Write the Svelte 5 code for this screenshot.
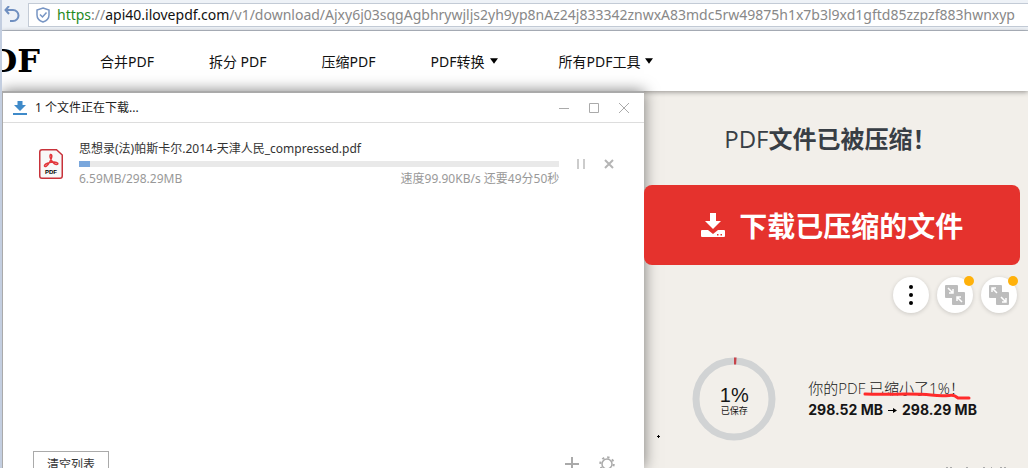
<script>
    const links = [
        { label: '合并PDF', menu: false },
        { label: '拆分 PDF', menu: false },
        { label: '压缩PDF', menu: false },
        { label: 'PDF转换', menu: true },
        { label: '所有PDF工具', menu: true }
    ];

    const download = {
        name: '思想录(法)帕斯卡尔.2014-天津人民_compressed.pdf',
        done: 6.59,
        total: 298.29,
        status: '速度99.90KB/s 还要49分50秒'
    };

    const saved = 1;
</script>

<div class="screen">
    <header class="toolbar">
        <button class="plain" aria-label="刷新">
            <svg width="16" height="18" viewBox="0 0 16 18" fill="none" stroke="#6f8fc0" stroke-width="2">
                <path d="M2 4h7a5.500 5.500 0 0 1 0 11H6" />
                <path d="M5 0L1.500 4L5 8" />
            </svg>
        </button>
        <div class="address">
            <svg width="16" height="16" viewBox="0 0 16 16" fill="none" stroke="#7795c4" stroke-width="1.500">
                <path d="M8 1L14 3V8C14 11.500 11 14 8 15C5 14 2 11.500 2 8V3Z" />
                <path d="M5 7.500L7.500 10L11.500 5.500" />
            </svg>
            <div class="url" role="textbox" tabindex="0" aria-label="地址"><span class="secure">https</span>://<span class="host">api40.ilovepdf.com</span>/v1/download/Ajxy6j03sqgAgbhrywjljs2yh9yp8nAz24j833342znwxA83mdc5rw49875h1x7b3l9xd1gftd85zzpzf883hwnxyp</div>
        </div>
    </header>

    <nav class="nav">
        <a class="logo" href="/" aria-label="PDF"><span>PDF</span></a>
        {#each links as link}
            <a class="link" class:menu={link.menu} href="/">
                {link.label}
                {#if link.menu}
                    <svg width="8" height="6" viewBox="0 0 9 6"><path d="M0 0H9L4.500 6Z" /></svg>
                {/if}
            </a>
        {/each}
    </nav>

    <div class="content">
        <section class="dialog">
            <div class="titlebar">
                <svg width="14" height="14" viewBox="0 0 14 14" fill="#3f8ac9">
                    <path d="M4.500 0h5v4H13L7 10L1 4h3.500zM0 12h14v2H0z" />
                </svg>
                <h2>1 个文件正在下载...</h2>
                <div class="controls">
                    <button class="plain" aria-label="最小化">
                        <svg width="12" height="12" viewBox="0 0 12 12" stroke="#aaa"><path d="M1 6.500h10" /></svg>
                    </button>
                    <button class="plain" aria-label="最大化">
                        <svg width="12" height="12" viewBox="0 0 12 12" fill="none" stroke="#aaa"><path d="M1.500 1.500h9v9h-9z" /></svg>
                    </button>
                    <button class="plain" aria-label="关闭">
                        <svg width="12" height="12" viewBox="0 0 12 12" stroke="#aaa"><path d="M1 1L11 11M11 1L1 11" /></svg>
                    </button>
                </div>
            </div>

            <div class="item">
                <svg class="file" width="24" height="30" viewBox="0 0 24 30">
                    <path d="M3 .75H17.500L23.250 6V27Q23.250 29.250 21 29.250H3Q.75 29.250 .75 27V3Q.75 .75 3 .75Z" fill="#f8f8f8" stroke="#c8323a" stroke-width="1.500" />
                    <path d="M11.500 5.500C14 5.500 12.500 10 10.500 13.500C8.500 17 6 18.500 5.500 17C5 15 11 13 15 13C19 13 20 15.500 17.500 15.500C14.500 15.500 9.500 8.500 11.500 5.500Z" fill="none" stroke="#e2353a" stroke-width="1.500" />
                    <text x="12" y="25" text-anchor="middle" class="tag">PDF</text>
                </svg>
                <div class="info">
                    <div class="name">{download.name}</div>
                    <div class="track">
                        <div class="bar" style="width: {(download.done / download.total) * 100}%;"></div>
                    </div>
                    <div class="stats">
                        <span>{download.done}MB/{download.total}MB</span>
                        <span>{download.status}</span>
                    </div>
                </div>
                <button class="plain" aria-label="暂停">
                    <svg width="12" height="12" viewBox="0 0 12 12" stroke="#ccc" stroke-width="2"><path d="M3 1v10M9 1v10" /></svg>
                </button>
                <button class="plain" aria-label="取消">
                    <svg width="12" height="12" viewBox="0 0 12 12" stroke="#b5b5b5" stroke-width="2"><path d="M2 2L10 10M10 2L2 10" /></svg>
                </button>
            </div>

            <div class="footer">
                <button class="clear">清空列表</button>
                <button class="plain" aria-label="新建">
                    <svg width="14" height="14" viewBox="0 0 14 14" stroke="#aaa" stroke-width="2"><path d="M7 0v14M0 7h14" /></svg>
                </button>
                <button class="plain" aria-label="设置">
                    <svg width="16" height="16" viewBox="0 0 16 16" fill="none" stroke="#aaa">
                        <circle cx="8" cy="8" r="5" stroke-width="1.500" />
                        <circle cx="8" cy="8" r="6.750" stroke-width="2" stroke-dasharray="2.300 3" />
                    </svg>
                </button>
            </div>
        </section>

        <main class="result">
            <h1>PDF<b>文件已被压缩！</b></h1>
            <button class="download">
                <svg width="24" height="24" viewBox="0 0 24 24" fill="#fff">
                    <path d="M9 0h6v8h5L12 16L4 8h5z" />
                    <path fill-rule="evenodd" d="M1 17h6l5 4l5-4h6q1 0 1 1v5q0 1-1 1H1q-1 0-1-1v-5q0-1 1-1zM16 21v1.500h1.500V21zM19.500 21v1.500H21V21z" />
                </svg>
                下载已压缩的文件
            </button>
            <div class="actions">
                <button class="round" aria-label="更多">
                    <svg width="20" height="20" viewBox="0 0 20 20">
                        <circle cx="10" cy="2" r="2" /><circle cx="10" cy="10" r="2" /><circle cx="10" cy="18" r="2" />
                    </svg>
                </button>
                <button class="round" aria-label="合并">
                    <svg width="20" height="20" viewBox="0 0 20 20">
                        <path d="M1 0h11q1 0 1 1v6h6q1 0 1 1v11q0 1-1 1H8q-1 0-1-1v-6H1q-1 0-1-1V1q0-1 1-1z" fill="#bdbdbd" />
                        <path d="M3 3L8 8M8 4V8H4M17 17L12 12M12 16V12H16" fill="none" stroke="#fff" stroke-width="1.500" />
                    </svg>
                    <i class="dot"></i>
                </button>
                <button class="round" aria-label="拆分">
                    <svg width="20" height="20" viewBox="0 0 20 20">
                        <path d="M1 0h11q1 0 1 1v6h6q1 0 1 1v11q0 1-1 1H8q-1 0-1-1v-6H1q-1 0-1-1V1q0-1 1-1z" fill="#bdbdbd" />
                        <path d="M8 8L3 3M3 7V3H7M12 12L17 17M17 13V17H13" fill="none" stroke="#fff" stroke-width="1.500" />
                    </svg>
                    <i class="dot"></i>
                </button>
            </div>
            <div class="summary">
                <div class="ring">
                    <svg width="84" height="84" viewBox="0 0 84 84" fill="none" stroke-width="7">
                        <circle cx="42" cy="42" r="38" stroke="#d1d3d4" />
                        <circle cx="42" cy="42" r="38" stroke="#c7434a" pathLength="100" stroke-dasharray="{saved} 100" transform="rotate(-90 42 42)" />
                    </svg>
                    <div class="percent">
                        <strong>{saved}%</strong>
                        <small>已保存</small>
                    </div>
                </div>
                <div class="sizes">
                    <p>你的PDF <span class="marked">已缩小了{saved}%！<svg width="108" height="8" viewBox="0 0 108 8" fill="none" stroke="#ff2b2b" stroke-width="3" stroke-linecap="round"><path d="M2 2C25 3 50 1 68 3S88 2 92 4L95 6L106 6" /></svg></span></p>
                    <p class="change">
                        <span>298.52 MB</span>
                        <svg width="9" height="7" viewBox="0 0 9 7"><path d="M0 3h5V1l4 2.500L5 6V4H0z" /></svg>
                        <span>298.29 MB</span>
                    </p>
                </div>
            </div>
            <svg class="cursor" width="3" height="3" viewBox="0 0 3 3"><path d="M1 0h1v1h1v1H2v1H1V2H0V1h1z" /></svg>
            <svg class="watermark" width="62" height="1" viewBox="0 0 62 1" fill="#aaa"><path d="M0 0h2v1H0zM4 0h2v1H4zM20 0h2v1h-2zM37 0h2v1h-2zM45 0h1v1h-1zM54 0h2v1h-2zM58 0h2v1h-2z" /></svg>
        </main>
    </div>
</div>

<style>
    :global(body) {
        margin: 0;
        overflow: hidden;
        font-family: "Noto Sans", "Noto Sans CJK SC", sans-serif;
        background: #f2efea;
    }
    .screen {
        height: 100vh;
        display: flex;
        flex-direction: column;
        overflow: hidden;
        box-sizing: border-box;
        border-left: 2px solid #c3cee0;
    }
    button {
        font-family: inherit;
        cursor: pointer;
    }
    .plain {
        display: flex;
        padding: 0;
        border: 0;
        background: none;
    }
    svg {
        flex: none;
    }
    h1, h2, p {
        margin: 0;
        font-weight: 400;
    }

    /* Browser toolbar */
    .toolbar {
        flex: none;
        display: flex;
        align-items: center;
        gap: 8px;
        height: 30px;
        padding-left: 2px;
        background: #eef2f7;
        border-bottom: 1px solid #b9c0ca;
    }
    .address {
        flex: 1;
        min-width: 0;
        display: flex;
        align-items: center;
        gap: 6px;
        height: 22px;
        padding-left: 6px;
        background: #fff;
        border: 1px solid #c3cbd6;
        border-right: 0;
        overflow: hidden;
    }
    .url {
        font-size: 14px;
        line-height: 22px;
        white-space: nowrap;
        color: #888;
    }
    .secure {
        color: #1f8a1f;
    }
    .host {
        color: #111;
    }

    /* Site navigation */
    .nav {
        flex: none;
        position: relative;
        display: flex;
        align-items: center;
        gap: 55px;
        height: 60px;
        background: #fff;
        box-shadow: 0 1px 5px rgba(0, 0, 0, 0.4);
    }
    .logo {
        display: flex;
        justify-content: flex-end;
        width: 38px;
        margin-right: 5px;
        overflow: hidden;
        font: bold 32px/40px "DejaVu Serif", serif;
        color: #000;
        text-decoration: none;
    }
    .link {
        display: flex;
        align-items: center;
        gap: 5px;
        font-size: 14px;
        font-weight: 400;
        color: #111;
        text-decoration: none;
        white-space: nowrap;
    }
    .menu {
        margin-right: 6px;
    }

    .content {
        flex: 1;
        min-height: 0;
        display: flex;
        align-items: stretch;
    }

    /* Download window */
    .dialog {
        position: relative;
        flex: none;
        width: 62.6%;
        display: flex;
        flex-direction: column;
        background: #fff;
        box-sizing: border-box;
        border-left: 1px solid #aaa;
        border-top: 2px solid #aaa;
        box-shadow: 0 0 14px rgba(0, 0, 0, 0.5);
        font-size: 12px;
        line-height: 16px;
    }
    .titlebar {
        flex: none;
        display: flex;
        align-items: center;
        gap: 8px;
        height: 29px;
        padding: 0 14px 0 10px;
        border-bottom: 1px solid #ddd;
    }
    .titlebar h2 {
        flex: 1;
        font-size: 12px;
        color: #222;
    }
    .controls {
        display: flex;
        gap: 18px;
    }
    .item {
        flex: none;
        display: flex;
        align-items: center;
        gap: 16px;
        height: 48px;
        padding: 17px 29px 0 36px;
    }
    .tag {
        font: bold 6px "Liberation Sans", sans-serif;
    }
    .info {
        flex: 1;
        min-width: 0;
    }
    .name {
        color: #333;
        white-space: nowrap;
    }
    .track {
        height: 6px;
        margin: 4px 0;
        background: #e9e9e9;
    }
    .bar {
        height: 100%;
        background: #7aa7dc;
    }
    .stats {
        display: flex;
        justify-content: space-between;
        color: #999;
    }
    .footer {
        flex: none;
        display: flex;
        align-items: center;
        gap: 20px;
        margin-top: 263px;
        padding: 0 29px 0 30px;
    }
    .clear {
        margin-right: auto;
        height: 26px;
        padding: 0 13px;
        background: #fff;
        border: 1px solid #aaa;
        font-size: 12px;
        color: #333;
    }

    /* Compression result */
    .result {
        flex: 1;
        min-width: 0;
        position: relative;
        display: flex;
        flex-direction: column;
        padding-right: 8px;
    }
    h1 {
        margin-top: 30px;
        padding-left: 80px;
        font-family: "Open Sans", "Noto Sans CJK SC", sans-serif;
        font-size: 24px;
        line-height: 36px;
        color: #383e45;
        white-space: nowrap;
    }
    .download {
        flex: none;
        display: flex;
        align-items: center;
        justify-content: center;
        gap: 14px;
        height: 80px;
        margin-top: 28px;
        border: 0;
        border-radius: 8px;
        background: #e5322d;
        color: #fff;
        font-size: 28px;
        font-weight: 700;
        white-space: nowrap;
    }
    .actions {
        display: flex;
        justify-content: flex-end;
        gap: 8px;
        margin-top: 12px;
        padding-right: 3px;
    }
    .round {
        position: relative;
        display: flex;
        align-items: center;
        justify-content: center;
        width: 36px;
        height: 36px;
        padding: 0;
        border: 0;
        border-radius: 50%;
        background: #fff;
        box-shadow: 0 1px 4px rgba(0, 0, 0, 0.16);
    }
    .dot {
        position: absolute;
        top: -1px;
        right: -1px;
        width: 10px;
        height: 10px;
        border-radius: 50%;
        background: #ffb10a;
    }
    .summary {
        display: flex;
        align-items: center;
        gap: 32px;
        margin-top: 44px;
        padding-left: 48px;
    }
    .ring {
        display: grid;
        place-items: center;
    }
    .ring > * {
        grid-area: 1 / 1;
    }
    .percent {
        display: flex;
        flex-direction: column;
        align-items: center;
        padding-top: 4px;
        font-family: "Liberation Sans", "Noto Sans CJK SC", sans-serif;
        color: #161616;
    }
    .percent strong {
        font-size: 20px;
        font-weight: 400;
        line-height: 20px;
    }
    .percent small {
        font-size: 9px;
        line-height: 12px;
    }
    .sizes {
        font-family: "Open Sans", "Noto Sans CJK SC", sans-serif;
        font-size: 15px;
        line-height: 22px;
        color: #161616;
        white-space: nowrap;
    }
    .sizes p {
        font-weight: 300;
    }
    .sizes .change {
        display: flex;
        align-items: center;
        gap: 5px;
        font-family: Inter, sans-serif;
        font-size: 14px;
        font-weight: 700;
    }
    .marked {
        position: relative;
    }
    .marked svg {
        position: absolute;
        left: -6px;
        bottom: -2px;
    }
    .cursor {
        position: absolute;
        left: 13px;
        top: 344px;
    }
    .watermark {
        position: absolute;
        right: 20px;
        bottom: 0;
    }
</style>
